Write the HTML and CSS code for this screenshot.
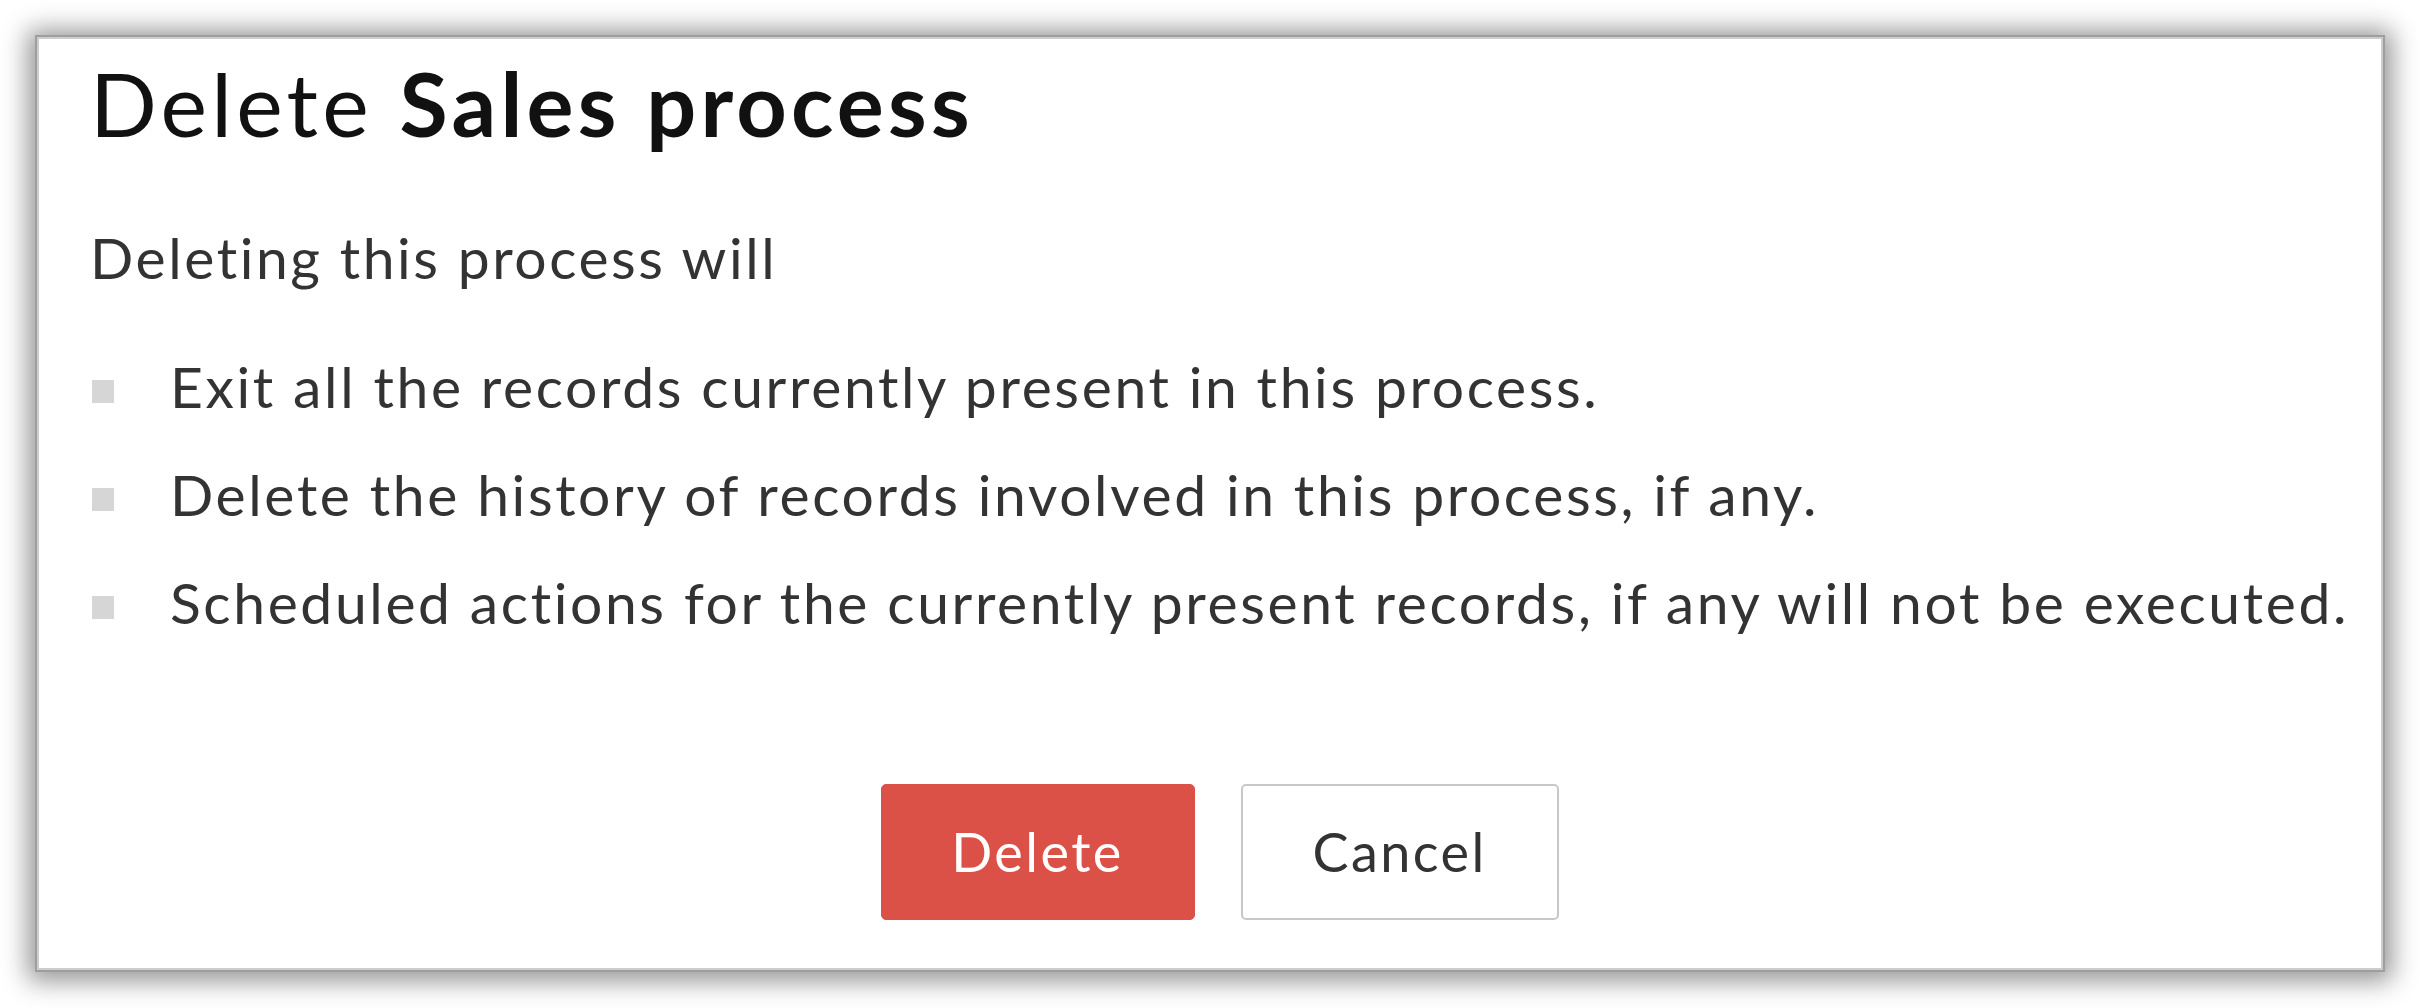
FILE: index.html
```html
<!DOCTYPE html>
<html lang="en">
<head>
<meta charset="utf-8">
<title>Delete Sales process</title>
<link rel="stylesheet" href="styles.css">
</head>
<body>
  <div class="dialog">
    <h1 class="title">Delete <b>Sales process</b></h1>
    <p class="lead">Deleting this process will</p>
    <ul class="effects">
      <li>Exit all the records currently present in this process.</li>
      <li>Delete the history of records involved in this process, if any.</li>
      <li>Scheduled actions for the currently present records, if any will not be executed.</li>
    </ul>
    <div class="actions">
      <button class="btn btn-danger">Delete</button>
      <button class="btn btn-plain">Cancel</button>
    </div>
  </div>
</body>
</html>
```

FILE: styles.css
```css
html, body {
  margin: 0;
  padding: 0;
  background: #ffffff;
}

body {
  width: 2420px;
  height: 1008px;
  overflow: hidden;
  font-family: "Lato", "Open Sans", sans-serif;
}

.dialog {
  box-sizing: border-box;
  margin: 37px 0 0 37px;
  width: 2346px;
  height: 933px;
  background: #ffffff;
  border: 2px solid #cdcdcd;
  box-shadow: 0 0 0 2px #9e9e9e, 0 2px 24px 9px rgba(0, 0, 0, 0.42);
  padding: 12px 10px 0 51px;
  display: flex;
  flex-direction: column;
}

.title {
  margin: 0;
  font-size: 88px;
  line-height: 1.2;
  font-weight: 400;
  letter-spacing: 0.048em;
  color: #111111;
  white-space: nowrap;
}

.title b {
  font-weight: 700;
}

.lead {
  margin: 66px 0 0 0;
  font-size: 57px;
  line-height: 1.2;
  letter-spacing: 0.045em;
  color: #333333;
  white-space: nowrap;
}

.effects {
  list-style: none;
  margin: 41px 0 0 0;
  padding: 0;
}

.effects li {
  position: relative;
  font-size: 57px;
  line-height: 108px;
  letter-spacing: 0.046em;
  color: #333333;
  padding-left: 80px;
  white-space: nowrap;
}

.effects li::before {
  content: "";
  position: absolute;
  left: 2px;
  top: 48px;
  width: 22px;
  height: 23px;
  background: #d6d6d6;
}

.actions {
  margin-top: 128px;
  display: flex;
  justify-content: center;
  gap: 46px;
  padding-right: 22px;
}

.btn {
  box-sizing: border-box;
  flex: none;
  height: 136px;
  border-radius: 5px;
  font-family: "Lato", "Open Sans", sans-serif;
  font-size: 54px;
  letter-spacing: 0.045em;
  cursor: pointer;
}

.btn-danger {
  width: 314px;
  background: #dc5147;
  border: 1px solid #dc5147;
  color: #ffffff;
}

.btn-plain {
  width: 318px;
  background: #ffffff;
  border: 2px solid #c8c8c8;
  color: #333333;
}
```
